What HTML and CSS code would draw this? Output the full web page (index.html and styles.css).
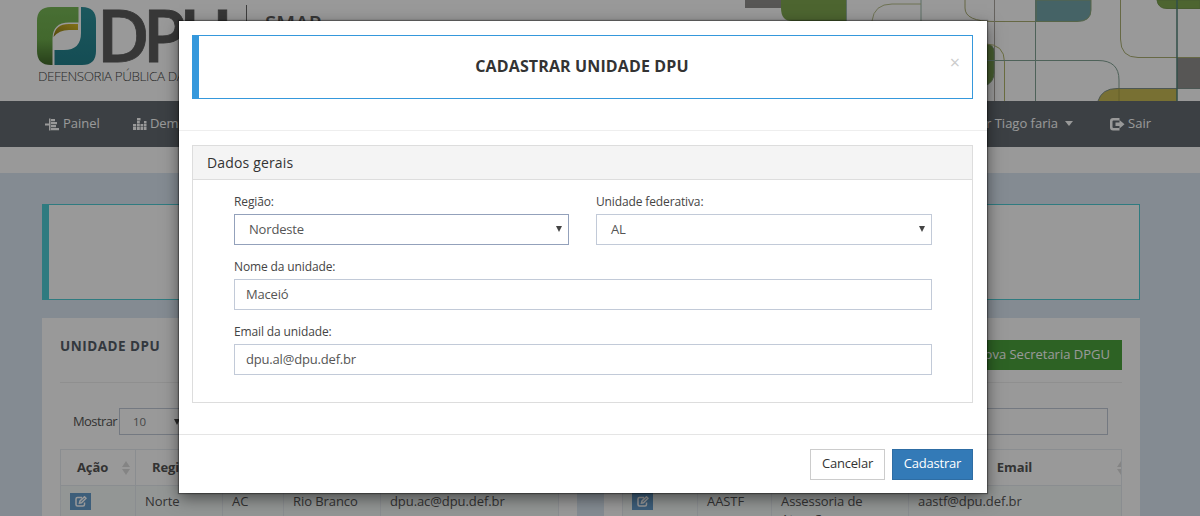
FILE: index.html
```html
<!DOCTYPE html>
<html lang="pt-BR">
<head>
<meta charset="utf-8">
<title>SMAP</title>
<link rel="stylesheet" href="styles.css">
</head>
<body>
<div class="page">
  <header class="masthead">
    <svg class="logo" width="340" height="101" viewBox="0 0 340 101">
      <defs>
        <linearGradient id="leaf" x1="0" y1="0" x2="0" y2="1"><stop offset="0" stop-color="#79b957"/><stop offset=".55" stop-color="#6fae4c"/><stop offset="1" stop-color="#426a2c"/></linearGradient>
        <linearGradient id="sea" x1="0" y1="0" x2="0" y2="1"><stop offset="0" stop-color="#2f929c"/><stop offset="1" stop-color="#22808c"/></linearGradient>
        <linearGradient id="gold" x1="0" y1="1" x2="1" y2="0"><stop offset="0" stop-color="#8c7a18"/><stop offset="1" stop-color="#d8bc28"/></linearGradient>
      </defs>
      <path d="M78.500 7H51Q37 7 37 21V51Q37 65 51 65H52.500V39Q52.500 22.500 69 22.500H78.500Z" fill="url(#leaf)"/>
      <path d="M81 7H82Q96 7 96 21V51Q96 65 82 65H54.500V50H64Q81 50 81 33Z" fill="url(#sea)"/>
      <path d="M53.500 37Q55 24 69 24H78V30H69Q59 30 53.500 37Z" fill="url(#gold)"/>
      <text class="logo-mark" x="96.500 142.500 179" y="61.500">DPU</text>
      <text class="logo-sub" x="38" y="81" textLength="189">DEFENSORIA PÚBLICA DA UNIÃO</text>
      <path d="M246.500 5V82" stroke="#666" />
      <text class="logo-app" x="265" y="30">SMAP</text>
    </svg>
    <svg class="art" width="460" height="101" viewBox="740 0 460 101" fill="none">
      <path d="M745 0H781V8H745Z" fill="#918f8e"/>
      <path d="M781 0H846V21H792Q781 21 781 8Z" fill="#80a951"/>
      <path d="M846.500 0V21M921 0V21" stroke="#9ab8a8"/>
      <path d="M872 21Q874 4 892 4H921" stroke="#b9c08c"/>
      <path d="M965 0V8Q965 21.500 994 21.500H1036" stroke="#aaad72"/>
      <path d="M1036 0H1091V10Q1091 21.500 1077 21.500H1036Z" fill="#74a5aa" stroke="#91a97a"/>
      <path d="M994.500 0V101" stroke="#aaa69f"/>
      <path d="M985 44Q994 44 994 52V73Q994 82 985 86Z" fill="#759a4e" stroke="#78976d"/>
      <path d="M985 44Q1004.500 44 1004.500 62V101" stroke="#b1b66c"/>
      <path d="M1035.500 0V101M960 60.500H1098Q1119 60.500 1119 80V101" stroke="#83a395"/>
      <path d="M1120.500 0V39Q1120.500 57.500 1138 57.500H1200" stroke="#acb073"/>
      <path d="M1157 0Q1158 8.500 1167 8.500H1200V0Z" fill="#80a951" stroke="#789a50"/>
      <path d="M1098 101Q1102 88.500 1117 88.500H1177V101Z" fill="#c9bb55"/>
      <path d="M1098 101Q1102 88.500 1117 88.500H1200" stroke="#7f918d"/>
      <path d="M1119 88V101" stroke="#a79e46"/>
      <path d="M1177 58H1200V88H1177Z" fill="#918f8e"/>
      <path d="M1177 0V101" stroke="#528378" stroke-width="1.500"/>
    </svg>
  </header>

  <nav class="nav">
    <a class="nav-item painel">
      <svg width="15" height="13" viewBox="0 0 15 13"><path d="M0 5.500h4v2H0zM4 .5h1.500v12H4zM6 1h4v2.300H6zM6 4h6v2.300H6zM6 7h5v2.300H6zM6 10h8v2.300H6z"/></svg>Painel</a>
    <a class="nav-item demandas">
      <svg width="14" height="12" viewBox="0 0 14 12"><path d="M0 9h3.200v3H0zM0 6h3.200v2.400H0zM4 9h2.800v3H4zM4 6h2.800v2.400H4zM4 3h2.800v2.400H4zM4 0h3.500v2.400H4zM7.500 9h2.800v3H7.500zM7.500 6h2.800v2.400H7.500zM11 9h2.500v3H11zM11 6h2.500v2.400H11zM11 3h2.500v2.400H11z"/></svg>Demandas</a>
    <a class="nav-item user">Administrador Tiago faria<span class="caret"></span></a>
    <a class="nav-item">
      <svg width="15" height="13" viewBox="0 0 15 13"><path d="M9.500 0H3Q0 0 0 3v6.500Q0 12.500 3 12.500h6.500V10H3.500Q2.500 10 2.500 9V3.500q0-1 1-1h6z"/><path d="M5.500 4.500h4V2L14.500 6.300 9.500 10.500V8h-4z"/></svg>Sair</a>
  </nav>

  <main class="content">
    <div class="note"></div>
    <div class="cols">
      <section class="card">
        <div class="card-head"><h2>UNIDADE DPU</h2></div>
        <div class="tools"><span class="tools-label">Mostrar</span><span class="length">10<i class="tri"></i></span></div>
        <div class="grid grid-a head">
          <b>Ação<svg class="sort" width="8" height="14" viewBox="0 0 8 14"><path d="M4 0l4 6H0zM4 14L0 8h8z"/></svg></b><b>Região</b><b></b><b></b><b></b>
        </div>
        <div class="grid grid-a row">
          <span><i class="edit"><svg width="12" height="11" viewBox="0 0 12 11"><path d="M7 1.500H2.500Q1 1.500 1 3v5.500Q1 10 2.500 10H8Q9.500 10 9.500 8.500V6.500M4.500 7L5 5 9.500.8 11 2.300 6.500 6.700z"/></svg></i></span><span>Norte</span><span>AC</span><span>Rio Branco</span><span>dpu.ac@dpu.def.br</span>
        </div>
      </section>
      <section class="card">
        <div class="card-head right"><a class="new">Nova Secretaria DPGU</a></div>
        <div class="tools right"><span class="search"></span></div>
        <div class="grid grid-b head">
          <b></b><b></b><b></b><b>Email<svg class="sort edge" width="4" height="14" viewBox="0 0 4 14"><path d="M4 0v6H0zM4 14L0 8h4z"/></svg></b>
        </div>
        <div class="grid grid-b row">
          <span><i class="edit"><svg width="12" height="11" viewBox="0 0 12 11"><path d="M7 1.500H2.500Q1 1.500 1 3v5.500Q1 10 2.500 10H8Q9.500 10 9.500 8.500V6.500M4.500 7L5 5 9.500.8 11 2.300 6.500 6.700z"/></svg></i></span><span>AASTF</span><span>Assessoria de Atuação</span><span>aastf@dpu.def.br</span>
        </div>
      </section>
    </div>
  </main>

  <div class="backdrop"></div>
  <div class="modal">
    <div class="modal-head">
      <div class="callout"><h1>CADASTRAR UNIDADE DPU</h1><span class="close">×</span></div>
    </div>
    <div class="modal-body">
      <div class="panel">
        <div class="panel-head">Dados gerais</div>
        <div class="form">
          <div class="pair">
            <div class="field"><label>Região:</label><div class="control select focus">Nordeste<i class="tri"></i></div></div>
            <div class="field"><label>Unidade federativa:</label><div class="control select">AL<i class="tri"></i></div></div>
          </div>
          <div class="field"><label>Nome da unidade:</label><div class="control">Maceió</div></div>
          <div class="field"><label>Email da unidade:</label><div class="control">dpu.al@dpu.def.br</div></div>
        </div>
      </div>
    </div>
    <div class="modal-foot"><a class="btn">Cancelar</a><a class="btn primary">Cadastrar</a></div>
  </div>
</div>
</body>
</html>
```
FILE: styles.css
```css
* { box-sizing: border-box; }
body { margin: 0; font: 13px/18px "Open Sans", sans-serif; color: #555; }
.page { position: relative; width: 1200px; height: 516px; overflow: hidden; background: #fff; }

.masthead { display: flex; justify-content: space-between; height: 101px; }
.logo-mark { font-size: 73px; font-weight: 600; fill: #5c5c5c; stroke: #5c5c5c; stroke-width: .8; }
.logo-sub { font-size: 13.5px; font-weight: 300; fill: #444; }
.logo-app { font-size: 20.500px; font-weight: 600; fill: #5c5c5c; }

.nav { display: flex; align-items: center; height: 46px; padding: 0 49px 2px 45px; background: #646c72; color: #fff; }
.nav-item { display: flex; align-items: center; gap: 3px; }
.nav-item svg { fill: #fff; margin-top: 2px; }
.painel { margin-right: 33px; }
.demandas { gap: 3px; }
.user { margin-left: auto; margin-right: 37px; gap: 7px; }
.caret { border: 4.500px solid transparent; border-top: 5px solid #fff; border-bottom: 0; }

.content { height: 343px; margin-top: 26px; padding: 31px 60px 0 42px; background: #dce8f4; }
.note { height: 96px; border: 1px solid #4fced6; border-left-width: 7px; background: #fff; }
.cols { display: grid; grid-template-columns: 535px 536px; gap: 27px; margin-top: 18px; }
.card { height: 240px; padding: 0 18px; background: #fff; }
.card-head { display: flex; height: 65px; padding-top: 19px; border-bottom: 1px solid #eee; }
.card-head h2 { margin: 0; font-size: 13.500px; font-weight: 700; line-height: 18px; letter-spacing: .5px; color: #555e68; }
.card-head.right { padding-top: 22px; justify-content: flex-end; }
.new { height: 30px; padding: 0 12px; background: #4ba43c; color: #fff; line-height: 29px; }
.tools { display: flex; align-items: center; gap: 2px; height: 27px; margin: 25px 14px 14px 13px; }
.tools-label { width: 44px; margin-top: -2px; white-space: nowrap; letter-spacing: -.6px; }
.tools.right { justify-content: flex-end; }
.length, .search { height: 27px; border: 1px solid #c2cad8; }
.length { display: flex; align-items: center; justify-content: space-between; width: 67px; padding: 0 5px 0 13px; font-size: 11.500px; color: #777; }
.search { width: 240px; }
.grid { display: grid; border-left: 1px solid #e7ecf1; }
.grid-a { grid-template-columns: 75px 87px 61px 97px 178px; }
.grid-b { grid-template-columns: 75px 74px 137px 213px; }
.head { height: 37px; border-top: 1px solid #e7ecf1; border-bottom: 1px solid #e7ecf1; }
.head b { display: flex; align-items: center; justify-content: center; position: relative; padding: 0 11px 2px 0; border-right: 1px solid #e7ecf1; color: #555; letter-spacing: -.1px; }
.grid-b b { padding-right: 1px; }
.sort { position: absolute; right: 5px; top: 11px; fill: #ddd; }
.sort.edge { right: 0; }
.row { height: 60px; background: #f6faf9; letter-spacing: -.08px; }
.row > span { padding: 6px 9px; border-right: 1px solid #e7ecf1; }
.edit { display: flex; align-items: center; justify-content: center; width: 21px; height: 17px; margin-top: 1px; background: #679dcc; }
.edit svg { fill: none; stroke: #fff; stroke-width: 1.500; }

.backdrop { position: absolute; inset: 0; background: rgba(0, 0, 0, .4); }
.modal { position: absolute; left: 179px; top: 21px; width: 808px; height: 472px; background: #fff; box-shadow: 0 0 1px 1px rgba(0,0,0,.35), 0 5px 15px rgba(0, 0, 0, .5); }
.modal-head { height: 110px; padding: 14px 14px 0 13px; border-bottom: 1px solid #eee; }
.callout { position: relative; display: flex; justify-content: center; height: 64px; border: 1px solid #3598dc; border-left-width: 7px; }
h1 { margin: 19px 7px 0 0; font-size: 16px; font-weight: 700; line-height: 22px; letter-spacing: .13px; color: #333; }
.close { position: absolute; right: 12px; top: 16px; font-size: 18px; line-height: 20px; color: #ccc; }
.modal-body { height: 304px; padding: 14px 14px 0 13px; border-bottom: 1px solid #e5e5e5; }
.panel { height: 258px; border: 1px solid #ddd; }
.panel-head { height: 34px; padding: 0 14px; border-bottom: 1px solid #ddd; background: #f4f4f4; font-size: 14px; line-height: 33px; letter-spacing: .15px; color: #333; }
.form { display: grid; gap: 16px; padding: 13px 40px 0 41px; }
.pair { display: grid; grid-template-columns: 335px 336px; gap: 27px; }
.field { display: grid; gap: 3px; }
label { height: 18px; font-size: 12px; line-height: 18px; letter-spacing: -.13px; color: #444; }
.control { height: 31px; margin-bottom: -3px; padding: 0 11px; border: 1px solid #c2cad8; line-height: 28px; letter-spacing: -.18px; color: #555; }
.select { display: flex; justify-content: space-between; align-items: center; padding: 0 6px 2px 14px; }
.focus { border-color: #93a1bb; }
.tri { border: 3px solid transparent; border-top: 6px solid #444; border-bottom: 0; }
.modal-foot { display: flex; justify-content: flex-end; gap: 7px; padding: 14px 14px 0; }
.btn { width: 75px; height: 31px; border: 1px solid #ccc; line-height: 27px; letter-spacing: -.2px; text-align: center; color: #333; }
.btn.primary { width: 81px; background: #337ab7; border-color: #2e6da4; color: #fff; }
```
